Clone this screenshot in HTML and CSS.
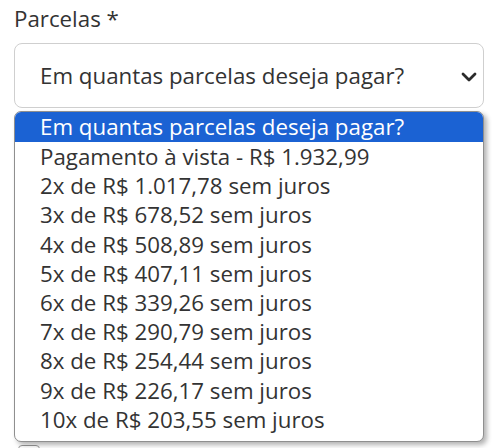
FILE: index.html
```html
<!DOCTYPE html>
<html>
<head lang="pt-BR">
    <meta charset="UTF-8">
    <title>Parcelas</title>
    <link rel="stylesheet" href="styles.css">
</head>
<body>
<div class="form">
    <label class="label">Parcelas *</label>
    <div class="field">
        <div class="select">
            <span>Em quantas parcelas deseja pagar?</span>
            <svg class="chevron" width="18" height="12" viewBox="0 0 18 12">
                <path d="M3 3 L9 9 L15 3" fill="none" stroke="#2b2b2b" stroke-width="2.8" stroke-linecap="round" stroke-linejoin="round"/>
            </svg>
        </div>
        <ul class="options">
            <li class="active">Em quantas parcelas deseja pagar?</li>
            <li>Pagamento à vista - R$ 1.932,99</li>
            <li>2x de R$ 1.017,78 sem juros</li>
            <li>3x de R$ 678,52 sem juros</li>
            <li>4x de R$ 508,89 sem juros</li>
            <li>5x de R$ 407,11 sem juros</li>
            <li>6x de R$ 339,26 sem juros</li>
            <li>7x de R$ 290,79 sem juros</li>
            <li>8x de R$ 254,44 sem juros</li>
            <li>9x de R$ 226,17 sem juros</li>
            <li>10x de R$ 203,55 sem juros</li>
        </ul>
    </div>
    <div class="check">
        <span class="box"></span>
        <span>Li e concordo com os termos de adesão</span>
    </div>
</div>
</body>
</html>
```

FILE: styles.css
```css
* {
    margin: 0;
    padding: 0;
    box-sizing: border-box;
}

body {
    background: #fff;
    color: #333;
    font-family: "Open Sans", "Noto Sans", sans-serif;
    font-size: 22.3px;
}

.form {
    padding: 6px 16px 0 14px;
}

.label {
    display: block;
    height: 37px;
    line-height: 26px;
}

.field {
    position: relative;
}

.select {
    display: flex;
    align-items: center;
    justify-content: space-between;
    height: 65px;
    padding: 0 5px 0 25px;
    border: 1px solid #cfcfcf;
    border-radius: 8px;
}

.chevron {
    margin-top: 3px;
}

.options {
    position: absolute;
    top: 68px;
    left: 0;
    width: 470px;
    list-style: none;
    background: #fff;
    border: 1px solid #8f8f8f;
    border-radius: 7px;
    padding-bottom: 7px;
    box-shadow: 3px 3px 5px rgba(0, 0, 0, .3);
    overflow: hidden;
}

.options li {
    height: 29.2px;
    line-height: 29px;
    padding-left: 25px;
    white-space: nowrap;
}

.options li.active {
    height: 30px;
    background: #1b62d3;
    color: #fff;
}

.check {
    display: flex;
    align-items: center;
    gap: 10px;
    margin-top: 336px;
    padding-left: 4px;
    font-size: 18px;
}

.check .box {
    width: 22px;
    height: 22px;
    border: 1px solid #9a9a9a;
    border-radius: 4px;
}
```
